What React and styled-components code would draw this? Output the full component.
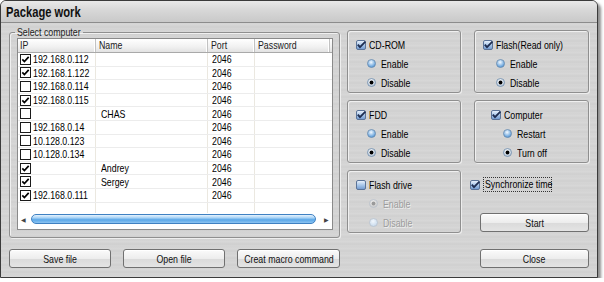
import React from 'react'
import styled, { createGlobalStyle } from 'styled-components'

const GlobalStyle = createGlobalStyle`
  html, body {
    margin: 0;
    padding: 0;
    background: #ffffff;
  }
  body {
    font-family: "Liberation Sans", Arial, sans-serif;
    font-size: 11px;
    color: #000;
  }
`

// the dialog uses a narrow face; squeeze the regular one to its width
const Txt = styled.span`
  display: inline-block;
  white-space: nowrap;
  transform: scaleX(0.8);
  transform-origin: ${p => p.$origin || 'left'} center;
`

const Window = styled.div`
  width: 598px;
  height: 278px;
  box-sizing: border-box;
  border: 1px solid #3b3b3b;
  border-radius: 6px 6px 0 0;
  box-shadow: 3px 3px 3px rgba(0, 0, 0, 0.45);
  display: flex;
  flex-direction: column;
  overflow: hidden;
  background-color: #d4d4d4;
  background-image: repeating-linear-gradient(
    180deg,
    #d6d6d6 0px,
    #d1d1d1 1px,
    #d8d8d8 2px,
    #d3d3d3 4px,
    #cfcfcf 5px,
    #d6d6d6 7px
  );
`

const TitleBar = styled.div`
  height: 21px;
  line-height: 22px;
  padding-left: 5px;
  border-bottom: 1px solid #8c8c8c;
  font-weight: bold;
  font-size: 14px;
  color: #111;
  background: linear-gradient(180deg, #e9e9e9 0%, #d7d7d7 45%, #c9c9c9 100%);
`

const Content = styled.div`
  padding: 4px 8px 0 8px;
  display: flex;
  flex-direction: column;
`

const TopArea = styled.div`
  display: flex;
  gap: 7px;
`

const Group = styled.fieldset`
  margin: 0;
  width: 331px;
  height: 211px;
  box-sizing: border-box;
  padding: 0 6px 7px 7px;
  border: 1px solid #8f8f8f;
  border-radius: 3px;
  box-shadow: inset 1px 1px 0 #f0f0f0, 1px 1px 0 #eeeeee;
  display: flex;
  flex-direction: column;
`

const Legend = styled.legend`
  padding: 0 2px;
  margin-left: -2px;
  font-size: 11px;
  line-height: 11px;
  color: #222;
  width: 64px;
`

const ListBox = styled.div`
  flex: 1;
  display: flex;
  flex-direction: column;
  border: 1px solid #8a8a8a;
  background: #fff;
`

const cols = '78px 112px 47px 1fr'

const Header = styled.div`
  display: grid;
  grid-template-columns: ${cols};
  height: 13px;
  border-bottom: 1px solid #a9a9a9;
  background: linear-gradient(180deg, #ffffff 0%, #f1f1f1 60%, #e2e2e2 100%);
`

const HeaderCell = styled.div`
  padding-left: ${p => p.$pad}px;
  line-height: 13px;
  color: #222;
  border-right: 1px solid #c2c2c2;
  box-shadow: inset -1px 0 0 #ffffff;
  &:last-child {
    margin-right: 2px;
  }
`

const Rows = styled.div`
  flex: 1;
  display: flex;
  flex-direction: column;
`

const Row = styled.div`
  display: grid;
  grid-template-columns: ${cols};
  height: 13.6px;
  flex: ${p => (p.$filler ? 1 : 'none')};
  box-sizing: border-box;
  border-bottom: ${p => (p.$filler ? 'none' : '1px solid #ececec')};
`

const Cell = styled.div`
  display: flex;
  align-items: center;
  gap: 2px;
  min-width: 0;
  padding-left: ${p => p.$pad}px;
  border-right: 1px solid #ebe8e0;
  white-space: nowrap;
  & > svg {
    flex-shrink: 0;
  }
  &:last-child {
    border-right: none;
  }
`

const ScrollBar = styled.div`
  height: 12px;
  margin: 0 1px 4px 1px;
  display: flex;
  align-items: center;
`

const Arrow = styled.div`
  width: 9px;
  display: flex;
  justify-content: center;
  color: #444;
  font-size: 6px;
`

const Thumb = styled.div`
  flex: 1;
  height: 8px;
  margin: 0 6px 0 3px;
  border: 1px solid #3f81c2;
  border-radius: 5px;
  background: linear-gradient(180deg, #e6f3fd 0%, #a8d3f6 35%, #5aa7e8 60%, #8cc4f2 100%);
`

const OptionsGrid = styled.div`
  margin-top: 3px;
  display: grid;
  grid-template-columns: 114px 115px;
  grid-template-rows: repeat(3, 63px);
  column-gap: 13px;
  row-gap: 7px;
`

const OptionBox = styled.div`
  box-sizing: border-box;
  border: 1px solid #8f8f8f;
  border-radius: 3px;
  box-shadow: inset 1px 1px 0 #f0f0f0, 1px 1px 0 #ededed;
  padding: 4px 0 0 ${p => p.$indent}px;
  display: flex;
  flex-direction: column;
`

const OptionRow = styled.div`
  height: 19px;
  display: flex;
  align-items: center;
  gap: ${p => (p.$radio ? 5 : 3)}px;
  padding-left: ${p => (p.$radio ? p.$shift : 0)}px;
  color: ${p => (p.$disabled ? '#9c9c9c' : '#000')};
  text-shadow: ${p => (p.$disabled ? '1px 1px 0 #eeeeee' : 'none')};
  & > svg {
    flex-shrink: 0;
  }
`

const SideCell = styled.div`
  display: flex;
  flex-direction: column;
  padding-top: 5px;
`

const SyncRow = styled.div`
  margin-left: -4px;
  height: 19px;
  display: flex;
  align-items: center;
  gap: 4px;
`

const FocusLabel = styled.span`
  width: 66px;
  height: 13px;
  line-height: 13px;
  outline: 1px dotted #333;
  padding-left: 1px;
`

const Button = styled.button`
  width: ${p => p.$w}px;
  height: 19px;
  padding: 0;
  display: flex;
  align-items: center;
  justify-content: center;
  font-family: inherit;
  font-size: 11px;
  color: #111;
  border: 1px solid #707070;
  border-radius: 3px;
  background: linear-gradient(180deg, #fbfbfb 0%, #ededed 50%, #dadada 51%, #e4e4e4 100%);
  box-shadow: inset 0 1px 0 #ffffff;
  white-space: nowrap;
`

const StartButton = styled(Button)`
  margin-top: auto;
  margin-bottom: 1px;
  margin-left: 6px;
`

const Footer = styled.div`
  margin-top: 11px;
  display: flex;
  gap: 12px;
`

const CloseButton = styled(Button)`
  margin-left: auto;
`

const ListCheck = ({ checked }) => (
  <svg width="11" height="11" viewBox="0 0 11 11">
    <rect x="0.5" y="0.5" width="10" height="10" fill="#fff" stroke="#1a1a1a" />
    {checked && (
      <path d="M2.3 5.4 L4.4 7.6 L8.7 2.9" fill="none" stroke="#000" strokeWidth="1.7" />
    )}
  </svg>
)

const AquaCheck = ({ checked }) => (
  <svg width="10" height="10" viewBox="0 0 10 10">
    <defs>
      <linearGradient id="aquaBox" x1="0" y1="0" x2="0" y2="1">
        <stop offset="0" stopColor="#eef5fd" />
        <stop offset="0.5" stopColor="#a9c7ea" />
        <stop offset="1" stopColor="#6f98cf" />
      </linearGradient>
    </defs>
    <rect x="0.5" y="0.5" width="9" height="9" rx="1.5" fill="url(#aquaBox)" stroke="#5b7397" />
    {checked && (
      <path d="M1.8 4.6 L4 7.2 L9.4 1.6" fill="none" stroke="#1e2d50" strokeWidth="1.8" />
    )}
  </svg>
)

const Radio = ({ checked, disabled }) => {
  const id = `rad-${checked ? 'on' : 'off'}-${disabled ? 'dis' : 'en'}`
  const stops = disabled
    ? checked
      ? ['#f2f2f2', '#c8c8c8']
      : ['#f2f7fc', '#c6d9ec']
    : checked
      ? ['#ffffff', '#b6c6d8']
      : ['#f4faff', '#4d93d6']
  return (
    <svg width="9" height="9" viewBox="0 0 9 9">
      <defs>
        <radialGradient id={id} cx="0.45" cy="0.35" r="0.65">
          <stop offset="0" stopColor={stops[0]} />
          <stop offset="1" stopColor={stops[1]} />
        </radialGradient>
      </defs>
      <circle cx="4.5" cy="4.5" r="4" fill={`url(#${id})`} stroke={disabled ? '#b9c2cc' : '#6d8bab'} strokeWidth="0.8" />
      {checked && <circle cx="4.5" cy="4.5" r="1.9" fill={disabled ? '#9a9a9a' : '#000'} />}
    </svg>
  )
}

const computers = [
  { ip: '192.168.0.112', name: '', on: true },
  { ip: '192.168.1.122', name: '', on: true },
  { ip: '192.168.0.114', name: '', on: false },
  { ip: '192.168.0.115', name: '', on: true },
  { ip: '', name: 'CHAS', on: false },
  { ip: '192.168.0.14', name: '', on: false },
  { ip: '10.128.0.123', name: '', on: false },
  { ip: '10.128.0.134', name: '', on: false },
  { ip: '', name: 'Andrey', on: true },
  { ip: '', name: 'Sergey', on: true },
  { ip: '192.168.0.111', name: '', on: true },
]

const Option = ({ title, checked, choices, selected, indent = 8, shift = 12, disabled }) => (
  <OptionBox $indent={indent}>
    <OptionRow>
      <AquaCheck checked={checked} />
      <Txt>{title}</Txt>
    </OptionRow>
    {choices.map((c, i) => (
      <OptionRow key={c} $radio $shift={shift} $disabled={disabled}>
        <Radio checked={i === selected} disabled={disabled} />
        <Txt>{c}</Txt>
      </OptionRow>
    ))}
  </OptionBox>
)

const App = () => {
  return (
    <>
      <GlobalStyle />
      <Window>
        <TitleBar>
          <Txt>Package work</Txt>
        </TitleBar>
        <Content>
          <TopArea>
            <Group>
              <Legend>
                <Txt>Select computer</Txt>
              </Legend>
              <ListBox>
                <Header>
                  <HeaderCell $pad={2}><Txt>IP</Txt></HeaderCell>
                  <HeaderCell $pad={3}><Txt>Name</Txt></HeaderCell>
                  <HeaderCell $pad={3}><Txt>Port</Txt></HeaderCell>
                  <HeaderCell $pad={3}><Txt>Password</Txt></HeaderCell>
                </Header>
                <Rows>
                  {computers.map((c, i) => (
                    <Row key={i}>
                      <Cell $pad={2}>
                        <ListCheck checked={c.on} />
                        <Txt>{c.ip}</Txt>
                      </Cell>
                      <Cell $pad={5}><Txt>{c.name}</Txt></Cell>
                      <Cell $pad={4}><Txt>2046</Txt></Cell>
                      <Cell />
                    </Row>
                  ))}
                  <Row $filler>
                    <Cell />
                    <Cell />
                    <Cell />
                    <Cell />
                  </Row>
                </Rows>
                <ScrollBar>
                  <Arrow>◀</Arrow>
                  <Thumb />
                  <Arrow>▶</Arrow>
                </ScrollBar>
              </ListBox>
            </Group>
            <OptionsGrid>
              <Option title="CD-ROM" checked choices={['Enable', 'Disable']} selected={1} indent={8} shift={11} />
              <Option title="Flash(Read only)" checked choices={['Enable', 'Disable']} selected={1} indent={8} shift={13} />
              <Option title="FDD" checked choices={['Enable', 'Disable']} selected={1} indent={8} shift={11} />
              <Option title="Computer" checked choices={['Restart', 'Turn off']} selected={1} indent={16} shift={12} />
              <Option title="Flash drive" checked={false} choices={['Enable', 'Disable']} selected={0} indent={8} shift={13} disabled />
              <SideCell>
                <SyncRow>
                  <AquaCheck checked />
                  <FocusLabel><Txt>Synchronize time</Txt></FocusLabel>
                </SyncRow>
                <StartButton $w={109}><Txt $origin="center">Start</Txt></StartButton>
              </SideCell>
            </OptionsGrid>
          </TopArea>
          <Footer>
            <Button $w={102}><Txt $origin="center">Save file</Txt></Button>
            <Button $w={102}><Txt $origin="center">Open file</Txt></Button>
            <Button $w={103}><Txt $origin="center">Creat macro command</Txt></Button>
            <CloseButton $w={109}><Txt $origin="center">Close</Txt></CloseButton>
          </Footer>
        </Content>
      </Window>
    </>
  )
}

export default App
